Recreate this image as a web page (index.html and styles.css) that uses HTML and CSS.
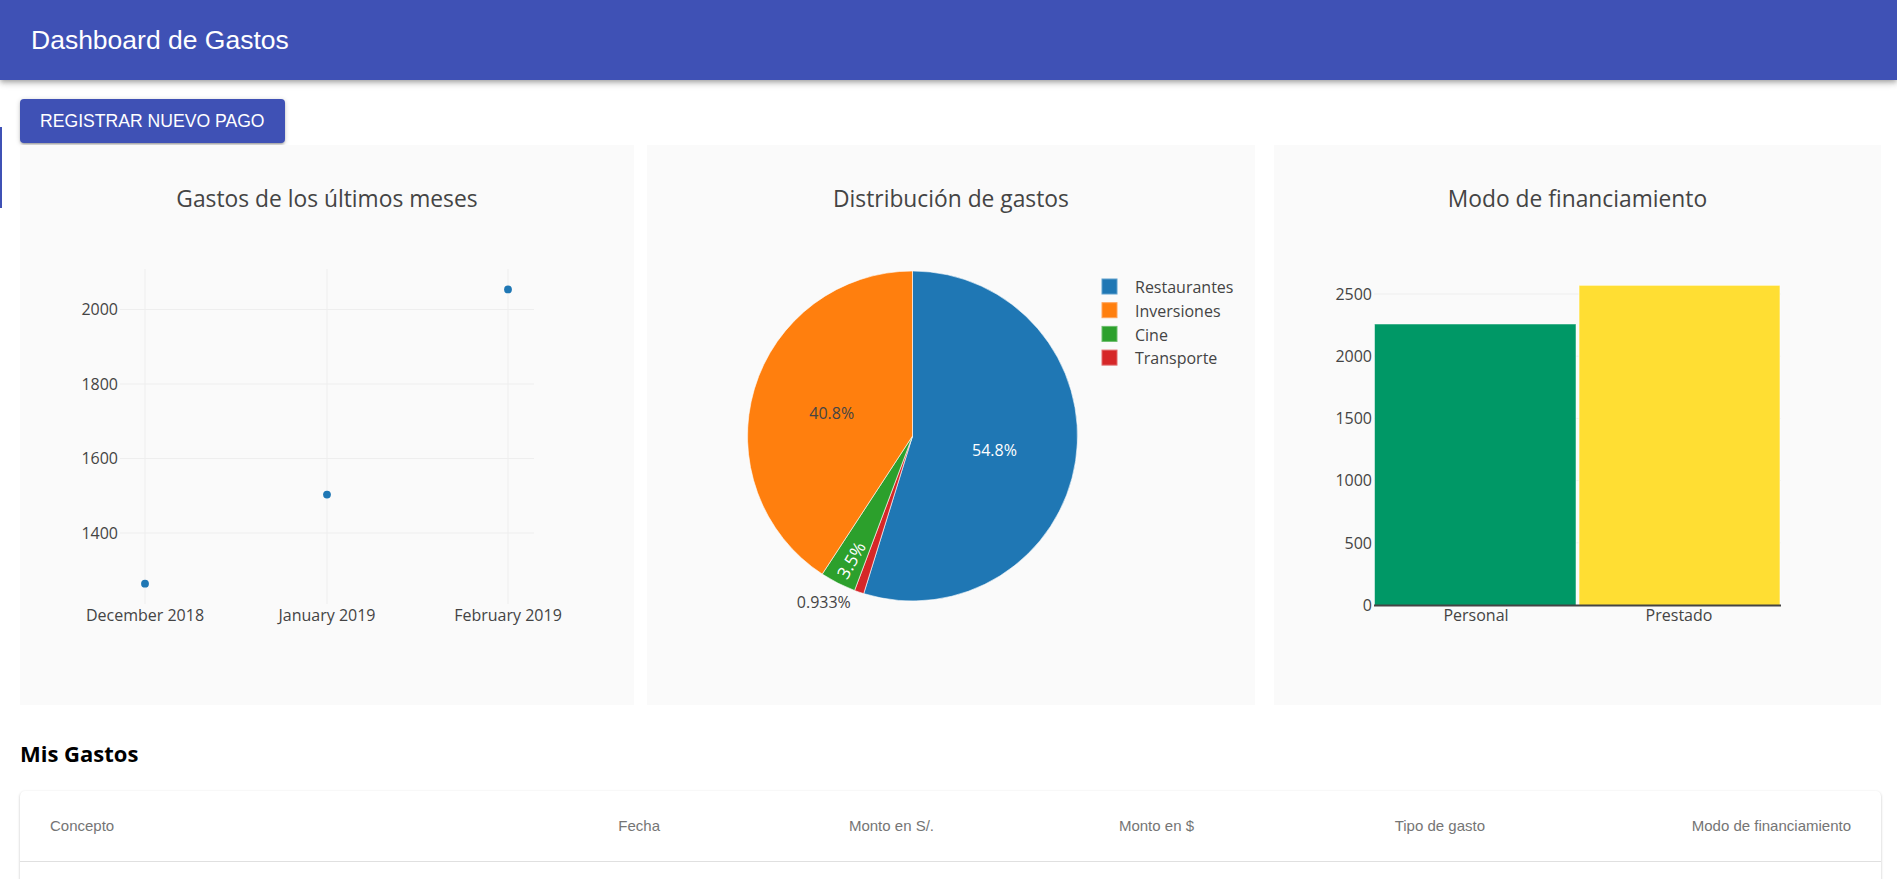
FILE: index.html
```html
<!DOCTYPE html>
<html lang="es">
<head>
<meta charset="utf-8">
<title>Dashboard de Gastos</title>
<link rel="stylesheet" href="styles.css">
</head>
<body>
<header class="appbar">
  <h1 class="appbar-title">Dashboard de Gastos</h1>
</header>
<div class="edge-mark"></div>
<main class="content">
  <button class="btn-primary" type="button">REGISTRAR NUEVO PAGO</button>

  <section class="charts">
    <div class="chart-card card-wide">
      <svg class="chart" width="614" height="560" viewBox="0 0 614 560">
        <text class="chart-title" x="307" y="61.5" text-anchor="middle">Gastos de los últimos meses</text>
        <g class="grid">
          <line x1="125" y1="124" x2="125" y2="459"/>
          <line x1="307" y1="124" x2="307" y2="459"/>
          <line x1="488" y1="124" x2="488" y2="459"/>
          <line x1="100" y1="164.5" x2="514" y2="164.5"/>
          <line x1="100" y1="239" x2="514" y2="239"/>
          <line x1="100" y1="313.5" x2="514" y2="313.5"/>
          <line x1="100" y1="388" x2="514" y2="388"/>
        </g>
        <g class="tick" text-anchor="end">
          <text x="98" y="170.2">2000</text>
          <text x="98" y="244.7">1800</text>
          <text x="98" y="319.2">1600</text>
          <text x="98" y="393.7">1400</text>
        </g>
        <g class="tick" text-anchor="middle">
          <text x="125" y="476">December 2018</text>
          <text x="307" y="476">January 2019</text>
          <text x="488" y="476">February 2019</text>
        </g>
        <g class="points">
          <circle cx="125" cy="438.7" r="3.9"/>
          <circle cx="307" cy="349.6" r="3.9"/>
          <circle cx="488" cy="144.4" r="3.9"/>
        </g>
      </svg>
    </div>

    <div class="chart-card card-mid">
      <svg class="chart" width="608" height="560" viewBox="0 0 608 560">
        <text class="chart-title" x="304" y="61.5" text-anchor="middle">Distribución de gastos</text>
        <g class="pie">
          <path class="slice-blue" d="M265.5,291 L265.5,126 A165,165 0 1 1 216.71,448.62 Z"/>
          <path class="slice-red" d="M265.5,291 L216.71,448.62 A165,165 0 0 1 207.55,445.49 Z"/>
          <path class="slice-green" d="M265.5,291 L207.55,445.49 A165,165 0 0 1 175.23,429.12 Z"/>
          <path class="slice-orange" d="M265.5,291 L175.23,429.12 A165,165 0 0 1 265.5,126 Z"/>
        </g>
        <text class="pie-label light" x="347.5" y="310.7" text-anchor="middle">54.8%</text>
        <text class="pie-label" x="184.7" y="273.7" text-anchor="middle">40.8%</text>
        <text class="pie-label light slim" x="203.7" y="415" text-anchor="middle" dominant-baseline="central" transform="rotate(-60 203.7 415)">3.5%</text>
        <text class="pie-label" x="176.8" y="462.7" text-anchor="middle">0.933%</text>
        <g class="legend">
          <rect class="swatch-blue" x="455" y="134" width="15" height="15"/>
          <rect class="swatch-orange" x="455" y="157.7" width="15" height="15"/>
          <rect class="swatch-green" x="455" y="181.4" width="15" height="15"/>
          <rect class="swatch-red" x="455" y="205.1" width="15" height="15"/>
          <text x="488" y="148.3">Restaurantes</text>
          <text x="488" y="172">Inversiones</text>
          <text x="488" y="195.7">Cine</text>
          <text x="488" y="219.4">Transporte</text>
        </g>
      </svg>
    </div>

    <div class="chart-card card-right">
      <svg class="chart" width="607" height="560" viewBox="0 0 607 560">
        <text class="chart-title" x="303.5" y="61.5" text-anchor="middle">Modo de financiamiento</text>
        <g class="grid">
          <line x1="100" y1="149" x2="507" y2="149"/>
          <line x1="100" y1="211.2" x2="507" y2="211.2"/>
          <line x1="100" y1="273.4" x2="507" y2="273.4"/>
          <line x1="100" y1="335.6" x2="507" y2="335.6"/>
          <line x1="100" y1="397.8" x2="507" y2="397.8"/>
        </g>
        <rect class="bar-green" x="100.5" y="179" width="201.5" height="281.5"/>
        <rect class="bar-yellow" x="305" y="140.3" width="201" height="320.2"/>
        <line class="axis" x1="100" y1="460.5" x2="507" y2="460.5"/>
        <g class="tick" text-anchor="end">
          <text x="98" y="154.7">2500</text>
          <text x="98" y="216.9">2000</text>
          <text x="98" y="279.1">1500</text>
          <text x="98" y="341.3">1000</text>
          <text x="98" y="403.5">500</text>
          <text x="98" y="466.2">0</text>
        </g>
        <g class="tick" text-anchor="middle">
          <text x="202" y="476">Personal</text>
          <text x="405" y="476">Prestado</text>
        </g>
      </svg>
    </div>
  </section>

  <h2 class="section-title">Mis Gastos</h2>

  <div class="table-card">
    <table class="data-table">
      <colgroup>
        <col class="col-concepto">
        <col class="col-fecha">
        <col class="col-soles">
        <col class="col-dolares">
        <col class="col-tipo">
        <col class="col-modo">
      </colgroup>
      <thead>
        <tr>
          <th class="cell-left">Concepto</th>
          <th>Fecha</th>
          <th>Monto en S/.</th>
          <th>Monto en $</th>
          <th>Tipo de gasto</th>
          <th class="cell-last">Modo de financiamiento</th>
        </tr>
      </thead>
      <tbody>
        <tr class="body-row"><td></td><td></td><td></td><td></td><td></td><td></td></tr>
      </tbody>
    </table>
  </div>
</main>
</body>
</html>
```

FILE: styles.css
```css
* { box-sizing: border-box; }

html, body {
  margin: 0;
  padding: 0;
  background: #ffffff;
}

body {
  font-family: "Liberation Sans", Arial, sans-serif;
  color: #000;
}

.appbar {
  height: 80px;
  background: #3f51b5;
  display: flex;
  align-items: center;
  padding: 0 30px 0 31px;
  box-shadow: 0 2px 4px -1px rgba(0,0,0,0.2), 0 4px 5px 0 rgba(0,0,0,0.14), 0 1px 10px 0 rgba(0,0,0,0.12);
  position: relative;
  z-index: 2;
}

.appbar-title {
  margin: 0;
  font-family: "Liberation Sans", Arial, sans-serif;
  font-weight: normal;
  font-size: 26.5px;
  line-height: 1;
  color: #ffffff;
}

.edge-mark {
  position: absolute;
  left: 0;
  top: 127px;
  width: 2px;
  height: 81px;
  background: #3f51b5;
}

.content {
  padding: 19px 16px 0 20px;
}

.btn-primary {
  display: block;
  height: 44px;
  padding: 0 20px;
  border: none;
  border-radius: 4px;
  background: #3f51b5;
  color: #ffffff;
  font-family: "Liberation Sans", Arial, sans-serif;
  font-size: 17.6px;
  line-height: 44px;
  cursor: pointer;
  box-shadow: 0 1px 5px 0 rgba(0,0,0,0.2), 0 2px 2px 0 rgba(0,0,0,0.14), 0 3px 1px -2px rgba(0,0,0,0.12);
}

.charts {
  margin-top: 2px;
  display: grid;
  grid-template-columns: 614px 614px 607px;
  column-gap: 13px;
}

.chart-card {
  height: 560px;
  background: #fafafa;
}

.card-mid {
  width: 608px;
  justify-self: start;
}

.chart {
  display: block;
  font-family: "Open Sans", "DejaVu Sans", sans-serif;
}

.chart-title {
  font-size: 22.8px;
  fill: #444444;
}

.grid line {
  stroke: #eeeeee;
  stroke-width: 1;
}

.tick text {
  font-size: 16px;
  fill: #444444;
}

.points circle {
  fill: #1f77b4;
}

.pie path {
  stroke: #ffffff;
  stroke-width: 0.6;
}

.slice-blue { fill: #1f77b4; }
.slice-orange { fill: #ff7f0e; }
.slice-green { fill: #2ca02c; }
.slice-red { fill: #d62728; }

.pie-label {
  font-size: 16px;
  fill: #444444;
}

.pie-label.light {
  fill: #ffffff;
}

.pie-label.slim {
  font-size: 17.5px;
}

.legend text {
  font-size: 16px;
  fill: #444444;
}

.legend rect {
  stroke-width: 1;
}

.swatch-blue { fill: #1f77b4; stroke: #5f9fcc; }
.swatch-orange { fill: #ff7f0e; stroke: #ffa45a; }
.swatch-green { fill: #2ca02c; stroke: #6cbd6c; }
.swatch-red { fill: #d62728; stroke: #e26a6b; }

.bar-green {
  fill: #009866;
  stroke: rgba(255,255,255,0.5);
  stroke-width: 1;
}

.bar-yellow {
  fill: #ffde33;
  stroke: rgba(255,255,255,0.6);
  stroke-width: 1;
}

.axis {
  stroke: #444444;
  stroke-width: 2;
}

.section-title {
  margin: 32.5px 0 0 0;
  font-family: "Open Sans", "DejaVu Sans", sans-serif;
  font-weight: 700;
  font-size: 22px;
  line-height: 30px;
  color: #000000;
}

.table-card {
  margin-top: 23.5px;
  background: #ffffff;
  border-radius: 5px;
  box-shadow: 0 1px 3px 0 rgba(0,0,0,0.2), 0 1px 1px 0 rgba(0,0,0,0.14), 0 2px 1px -1px rgba(0,0,0,0.12);
  overflow: hidden;
}

.data-table {
  width: 100%;
  table-layout: fixed;
  border-collapse: collapse;
}

.col-concepto { width: 560px; }
.col-fecha { width: 150px; }
.col-soles { width: 274px; }
.col-dolares { width: 260px; }
.col-tipo { width: 291px; }
.col-modo { width: 326px; }

.data-table th {
  height: 70px;
  padding: 0 70px 0 30px;
  text-align: right;
  font-family: "Liberation Sans", Arial, sans-serif;
  font-weight: normal;
  font-size: 15px;
  color: #757575;
  border-bottom: 1px solid #e0e0e0;
  white-space: nowrap;
}

.data-table th.cell-left {
  text-align: left;
}

.data-table th.cell-last {
  padding-right: 30px;
}

.body-row td {
  height: 60px;
  border-bottom: 1px solid #e0e0e0;
}
```
